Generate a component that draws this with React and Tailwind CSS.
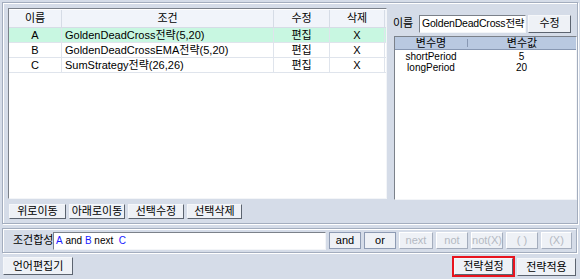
import React from "react";

const F = { fontFamily: '"Liberation Sans", "Noto Sans CJK KR", sans-serif' };

function Btn({ children, className = "", disabled = false, blue = false }) {
  return (
    <div
      className={
        "flex items-center justify-center bg-[#eef1f6] border text-[11px] leading-none whitespace-nowrap " +
        (blue
          ? "border-[#8e9bb3] text-black "
          : disabled
          ? "border-t-[#ffffff] border-l-[#ffffff] border-r-[#a4adbd] border-b-[#a4adbd] text-[#b4b9c2] "
          : "border-t-[#f5f7fa] border-l-[#f5f7fa] border-r-[#5c6470] border-b-[#5c6470] text-black ") +
        className
      }
    >
      {children}
    </div>
  );
}

const rows = [
  ["A", "GoldenDeadCross전략(5,20)", true],
  ["B", "GoldenDeadCrossEMA전략(5,20)", false],
  ["C", "SumStrategy전략(26,26)", false],
];

export default function App() {
  return (
    <div style={F} className="w-[580px] h-[279px] bg-[#d5dce8] text-black text-[11px] overflow-hidden relative">
      {/* top panel */}
      <div className="absolute left-[2px] top-[2px] w-[576px] h-[222px] border border-[#a3adbe] shadow-[inset_1px_1px_0_#ffffff,1px_1px_0_#ffffff]">
        <div className="flex pl-[5px] pt-[5px]">
          {/* left */}
          <div className="w-[379px] flex flex-col">
            <div className="h-[191px] bg-white border border-t-[#7b818a] border-l-[#7b818a] border-r-[#f3f5f8] border-b-[#f3f5f8] pt-[1px]">
              <div className="flex h-[18px] bg-[#f1f4fa] border-b border-[#d6dce6]">
                <div className="w-[53px] border-r border-[#d6dce6] flex items-center justify-center">이름</div>
                <div className="w-[212px] border-r border-[#d6dce6] flex items-center justify-center">조건</div>
                <div className="w-[56px] border-r border-[#d6dce6] flex items-center justify-center">수정</div>
                <div className="w-[55px] border-r border-[#d6dce6] flex items-center justify-center">삭제</div>
              </div>
              {rows.map(([n, c, sel]) => (
                <div key={n} className={"flex h-[15px] border-b border-[#dfe4ec] " + (sel ? "bg-[#c8f7e1]" : "bg-white")}>
                  <div className="w-[53px] border-r border-[#dfe4ec] flex items-center justify-center">{n}</div>
                  <div className="w-[212px] border-r border-[#dfe4ec] flex items-center pl-[3px] whitespace-nowrap overflow-hidden">{c}</div>
                  <div className="w-[56px] border-r border-[#dfe4ec] flex items-center justify-center">편집</div>
                  <div className="w-[55px] border-r border-[#dfe4ec] flex items-center justify-center">X</div>
                </div>
              ))}
            </div>
            <div className="flex gap-[3px] mt-[5px] ml-[1px]">
              <Btn className="w-[57px] h-[15px]">위로이동</Btn>
              <Btn className="w-[56px] h-[15px]">아래로이동</Btn>
              <Btn className="w-[56px] h-[15px]">선택수정</Btn>
              <Btn className="w-[55px] h-[15px]">선택삭제</Btn>
            </div>
          </div>
          {/* right */}
          <div className="ml-[6px] w-[183px] flex flex-col">
            <div className="flex items-center h-[19px] mt-[6px]">
              <span className="w-[26px] whitespace-nowrap">이름</span>
              <div className="w-[107px] h-[18px] bg-white border border-t-[#7b818a] border-l-[#7b818a] border-r-[#f3f5f8] border-b-[#f3f5f8] pl-[2px] flex items-center whitespace-nowrap overflow-hidden text-[10.5px] tracking-[-0.2px]">GoldenDeadCross전략</div>
              <Btn className="ml-[2px] w-[43px] h-[18px]">수정</Btn>
            </div>
            <div className="mt-[3px] ml-[1px] w-[183px] h-[164px] bg-white border border-t-[#7b818a] border-l-[#7b818a] border-r-[#f3f5f8] border-b-[#f3f5f8]">
              <div className="flex h-[13px] bg-[#b9c9e1] border-b border-[#8898b3] text-[11px] leading-none">
                <div className="w-[72px] flex items-center justify-center">변수명</div>
                <div className="w-[1px] my-[2px] bg-[#8898b3]"></div>
                <div className="flex-1 flex items-center justify-center">변수값</div>
              </div>
              <div className="text-[10px] leading-[11px] pt-[1px]">
                <div className="flex">
                  <div className="w-[72px] text-center">shortPeriod</div>
                  <div className="flex-1 text-center">5</div>
                </div>
                <div className="flex">
                  <div className="w-[72px] text-center">longPeriod</div>
                  <div className="flex-1 text-center">20</div>
                </div>
              </div>
            </div>
          </div>
        </div>
      </div>
      {/* condition panel */}
      <div className="absolute left-[2px] top-[228px] w-[575px] h-[25px] border border-[#a3adbe] shadow-[inset_1px_1px_0_#ffffff,1px_1px_0_#ffffff] flex items-center">
        <span className="ml-[10px] w-[40px] whitespace-nowrap">조건합성</span>
        <div className="w-[273px] h-[18px] bg-white border border-t-[#7b818a] border-l-[#7b818a] border-r-[#f3f5f8] border-b-[#f3f5f8] flex items-center pl-[2px] whitespace-pre text-[10px]">
          <span className="text-[#1a1aff]">A</span> and <span className="text-[#1a1aff]">B</span> next  <span className="text-[#1a1aff]">C</span>
        </div>
        <div className="flex gap-[3px] ml-[3px]">
          <Btn blue className="w-[32px] h-[17px]">and</Btn>
          <Btn blue className="w-[32px] h-[17px]">or</Btn>
          <Btn disabled className="w-[34px] h-[17px]">next</Btn>
          <Btn disabled className="w-[32px] h-[17px]">not</Btn>
          <Btn disabled className="w-[32px] h-[17px]">not(X)</Btn>
          <Btn disabled className="w-[32px] h-[17px]">( )</Btn>
          <Btn disabled className="w-[31px] h-[17px]">(X)</Btn>
        </div>
      </div>
      {/* bottom */}
      <Btn className="absolute left-[3px] top-[257px] w-[70px] h-[18px]">언어편집기</Btn>
      <div className="absolute left-[452px] top-[256px] w-[63px] h-[21px] border-2 border-[#e8141e] flex">
        <Btn className="flex-1">전략설정</Btn>
      </div>
      <Btn className="absolute left-[517px] top-[258px] w-[59px] h-[18px]">전략적용</Btn>
    </div>
  );
}
